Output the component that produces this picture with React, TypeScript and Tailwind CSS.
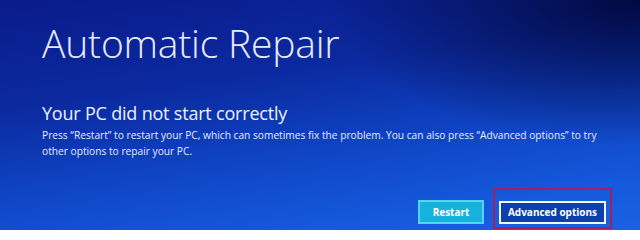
import React from "react";

export default function App() {
  return (
    <div
      className="w-[640px] h-[230px] overflow-hidden text-white bg-[radial-gradient(ellipse_70%_90%_at_100%_0%,rgba(0,4,50,0.85),rgba(0,4,50,0)_70%),linear-gradient(172deg,#0a1b8a_0%,#0b2aa0_35%,#0f45c4_62%,#1559dc_85%,#1a62e2_100%)]"
      style={{ fontFamily: '"Open Sans", "Noto Sans", sans-serif' }}
    >
      <div className="flex flex-col pl-[42px] pr-[28px]">
        <h1 className="mt-[17px] text-[39px] leading-[52px] font-light tracking-[-0.2px] text-[#e8ecff]">
          Automatic Repair
        </h1>
        <h2 className="mt-[32px] text-[18px] leading-[24px] font-normal tracking-[-0.2px] text-[#eef2ff]">
          Your PC did not start correctly
        </h2>
        <p className="mt-[2px] text-[10.2px] leading-[16px] text-[#e6ecff]">
          Press “Restart” to restart your PC, which can sometimes fix the problem. You can also press “Advanced options” to try
          <br />
          other options to repair your PC.
        </p>
        <div className="mt-[29px] flex items-end justify-end gap-[9px]">
          <button className="mb-[5px] w-[66px] h-[24px] bg-[#17b3de] border-2 border-[#55d4ee] text-[10px] font-bold text-white">
            Restart
          </button>
          <div className="border-2 border-[#a3205c] pt-[8px] pb-[3px] px-[4px]">
            <button className="w-[107px] h-[23px] bg-[#0f3fae] border-2 border-[#f2f6ff] text-[10px] font-bold text-white">
              Advanced options
            </button>
          </div>
        </div>
      </div>
    </div>
  );
}
